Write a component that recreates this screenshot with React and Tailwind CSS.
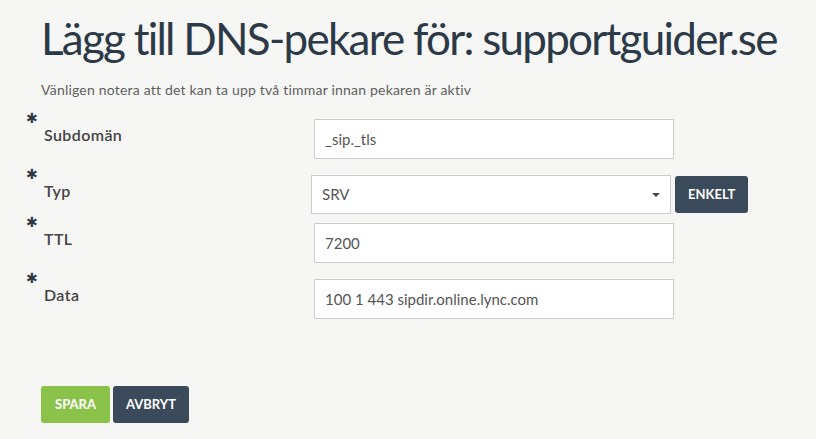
import { useState } from "react";

const Field = ({ label, children, className = "" }) => (
  <div className={`flex items-start ${className}`}>
    <div className="-mt-[7px] w-[270px] shrink-0 pl-[26px]">
      <div className="font-['DejaVu_Sans',sans-serif] text-[14px] leading-[13px] text-[#2c3a48]">✱</div>
      <div className="pl-[18px] text-[16px] font-semibold leading-[20px] tracking-[0.4px] text-[#444]">{label}</div>
    </div>
    {children}
  </div>
);

const TextInput = ({ value }) => (
  <input
    defaultValue={value}
    className="ml-[44px] h-[40px] w-[360px] border border-[#ccc] bg-white px-[10px] text-[15px] text-[#555] outline-none"
  />
);

const App = () => {
  const [type, setType] = useState("SRV");

  return (
    <div className="h-[439px] w-[816px] overflow-hidden bg-[#f6f6f5] px-[41px] pt-[12px] font-['Lato',sans-serif]">
      <h1 className="whitespace-nowrap text-[44px] font-normal leading-[52px] tracking-[-1.75px] text-[#2c3a48]">
        Lägg till DNS-pekare för: supportguider.se
      </h1>

      <p className="mt-[18px] text-[14px] leading-[16px] tracking-[0.2px] text-[#5f5f5f]">
        Vänligen notera att det kan ta upp två timmar innan pekaren är aktiv
      </p>

      <div className="-ml-[41px] mt-[21px] flex flex-col">
        <Field label="Subdomän">
          <TextInput value="_sip._tls" />
        </Field>

        <Field label="Typ" className="mt-[16px]">
          <div className="ml-[41px] flex items-center gap-[4px]">
            <div className="relative h-[39px] w-[360px] border border-[#ccc] bg-white">
              <select
                value={type}
                onChange={e => setType(e.target.value)}
                className="h-full w-full appearance-none bg-transparent px-[10px] text-[15px] text-[#555] outline-none"
              >
                <option>A</option>
                <option>CNAME</option>
                <option>MX</option>
                <option>SRV</option>
                <option>TXT</option>
              </select>
              <span className="pointer-events-none absolute right-[10px] top-[17px] h-0 w-0 border-x-[4px] border-t-[4px] border-x-transparent border-t-[#444]" />
            </div>
            <button className="h-[37px] rounded-[3px] bg-[#3a4a5a] px-[13px] text-[13px] font-bold text-white">
              ENKELT
            </button>
          </div>
        </Field>

        <Field label="TTL" className="mt-[9px]">
          <TextInput value="7200" />
        </Field>

        <Field label="Data" className="mt-[16px]">
          <TextInput value="100 1 443 sipdir.online.lync.com" />
        </Field>
      </div>

      <div className="mt-[67px] flex gap-[3px]">
        <button className="h-[37px] rounded-[3px] bg-[#8bc34a] px-[14px] text-[13px] font-bold text-white">SPARA</button>
        <button className="h-[37px] rounded-[3px] bg-[#3a4a5a] px-[13px] text-[13px] font-bold text-white">AVBRYT</button>
      </div>
    </div>
  );
};

export default App;
